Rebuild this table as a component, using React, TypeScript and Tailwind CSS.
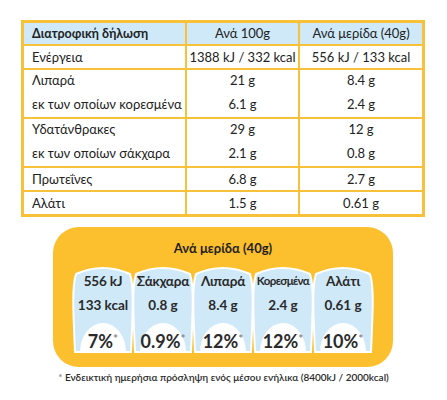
const font = { fontFamily: 'Lato, "Open Sans", sans-serif' };

const rows = [
  { lines: ["Ενέργεια"], per100: ["1388 kJ / 332 kcal"], portion: ["556 kJ / 133 kcal"] },
  { lines: ["Λιπαρά", "εκ των οποίων κορεσμένα"], per100: ["21 g", "6.1 g"], portion: ["8.4 g", "2.4 g"] },
  { lines: ["Υδατάνθρακες", "εκ των οποίων σάκχαρα"], per100: ["29 g", "2.1 g"], portion: ["12 g", "0.8 g"] },
  { lines: ["Πρωτεΐνες"], per100: ["6.8 g"], portion: ["2.7 g"] },
  { lines: ["Αλάτι"], per100: ["1.5 g"], portion: ["0.61 g"] },
];

const badges = [
  { top: "556 kJ", mid: "133 kcal", pct: "7%" },
  { top: "Σάκχαρα", mid: "0.8 g", pct: "0.9%" },
  { top: "Λιπαρά", mid: "8.4 g", pct: "12%" },
  { top: "Κορεσμένα", mid: "2.4 g", pct: "12%" },
  { top: "Αλάτι", mid: "0.61 g", pct: "10%" },
];

function Cell({ items, align }: { items: string[]; align: "left" | "center" }) {
  const multi = items.length > 1;
  return (
    <div
      className={`flex flex-col ${multi ? "gap-[3px] pb-[2px]" : ""} ${
        align === "left" ? "pl-[8px] items-start" : "items-center"
      }`}
    >
      {items.map((t) => (
        <div key={t} className={`${multi ? "h-[21px] leading-[21px]" : "h-[22px] leading-[22px]"} whitespace-nowrap`}>
          {t}
        </div>
      ))}
    </div>
  );
}

function Badge({ top, mid, pct }: { top: string; mid: string; pct: string }) {
  const long = top.length > 8;
  return (
    <div className="relative w-[62px] h-[88px] -ml-[2px] first:ml-0">
      <svg className="absolute inset-0" width="62" height="88" viewBox="0 0 62 88">
        <path
          d="M4,8 Q31,-4 58,8 C62,20 61,42 59,86 L3,86 C1,42 0,20 4,8 Z"
          fill="#cfe9f8"
          stroke="#ffffff"
          strokeWidth="2"
        />
        <path d="M8,86 A23,29 0 0 1 54,86 Z" fill="#ffffff" />
      </svg>
      <div className="relative flex flex-col items-center pt-[5px] font-bold text-[#2a2a2a]">
        <div
          className={`h-[20px] leading-[20px] whitespace-nowrap ${
            long ? "text-[11.5px] tracking-[-0.6px]" : "text-[13.5px] tracking-[-0.2px]"
          }`}
        >
          {top}
        </div>
        <div className="h-[20px] leading-[20px] text-[13.5px] mt-[4px] whitespace-nowrap">{mid}</div>
        <div className="h-[20px] leading-[20px] text-[18px] mt-[16px] whitespace-nowrap">
          {pct}
          <span className="text-[12px] align-top text-[#8a8a8a] font-bold leading-[16px]">*</span>
        </div>
      </div>
    </div>
  );
}

export default function App() {
  return (
    <div className="w-[447px] h-[400px] bg-white text-[#222] text-[13px]" style={font}>
      <div className="pt-[20px] px-[21px]">
        <div className="border-[3px] border-[#f8c13a] w-[404px]">
          <div className="grid grid-cols-[161px_113px_124px] bg-[#cfe9f8] h-[21px] items-center">
            <div className="pl-[8px] font-bold text-[12.5px] leading-[21px]">Διατροφική δήλωση</div>
            <div className="text-center border-l-2 border-[#f8c13a] leading-[21px]">Ανά 100g</div>
            <div className="text-center border-l-2 border-[#f8c13a] leading-[21px]">Ανά μερίδα (40g)</div>
          </div>
          {rows.map((r) => (
            <div key={r.lines[0]} className="grid grid-cols-[161px_113px_124px] border-t-2 border-[#f8c13a]">
              <Cell items={r.lines} align="left" />
              <div className="border-l-2 border-[#f8c13a]">
                <Cell items={r.per100} align="center" />
              </div>
              <div className="border-l-2 border-[#f8c13a]">
                <Cell items={r.portion} align="center" />
              </div>
            </div>
          ))}
        </div>
      </div>

      <div className="mt-[10px] ml-[53px] w-[340px] h-[140px] rounded-[26px] bg-[#fcbf2d] flex flex-col items-center">
        <div className="mt-[12px] h-[18px] leading-[18px] font-bold text-[13px] text-[#1f1f1f]">Ανά μερίδα (40g)</div>
        <div className="flex mt-[9px]">
          {badges.map((b) => (
            <Badge key={b.top} {...b} />
          ))}
        </div>
      </div>

      <div className="mt-[3px] text-center text-[10px] text-[#2a2a2a] font-semibold">
        <span className="text-[#888]">*</span> Ενδεικτική ημερήσια πρόσληψη ενός μέσου ενήλικα (8400kJ / 2000kcal)
      </div>
    </div>
  );
}
